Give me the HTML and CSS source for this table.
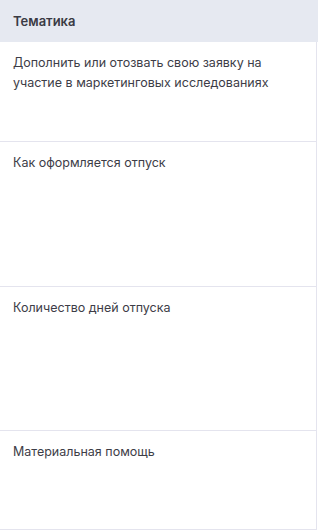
FILE: index.html
```html
<!DOCTYPE html>
<html lang="ru">
<head>
<meta charset="utf-8">
<link rel="stylesheet" href="styles.css">
</head>
<body>
<div class="table">
  <div class="head">Тематика</div>
  <div class="body">
    <div class="row r1">Дополнить или отозвать свою заявку на участие в маркетинговых исследованиях</div>
    <div class="row r2">Как оформляется отпуск</div>
    <div class="row r3">Количество дней отпуска</div>
    <div class="row r4">Материальная помощь</div>
  </div>
</div>
</body>
</html>
```
FILE: styles.css
```css
html, body { margin: 0; padding: 0; background: #fff; }
body { font-family: Inter, "Noto Sans", sans-serif; color: #3d3d47; }
.table { width: 318px; }
.head {
  height: 42px;
  background: #e6e9f1;
  box-sizing: border-box;
  padding: 0 13px;
  display: flex;
  align-items: center;
  font-size: 13px;
  font-weight: 600;
  color: #3a3a44;
}
.body { border-right: 1px solid #e4e4ee; width: 317px; box-sizing: border-box; }
.row {
  box-sizing: border-box;
  border-bottom: 1px solid #e4e4ee;
  padding: 11px 13px 0;
  font-size: 12.5px;
  line-height: 20px;
}
.r1 { height: 100px; }
.r2 { height: 145px; }
.r3 { height: 144px; }
.r4 { height: 99px; }
```
